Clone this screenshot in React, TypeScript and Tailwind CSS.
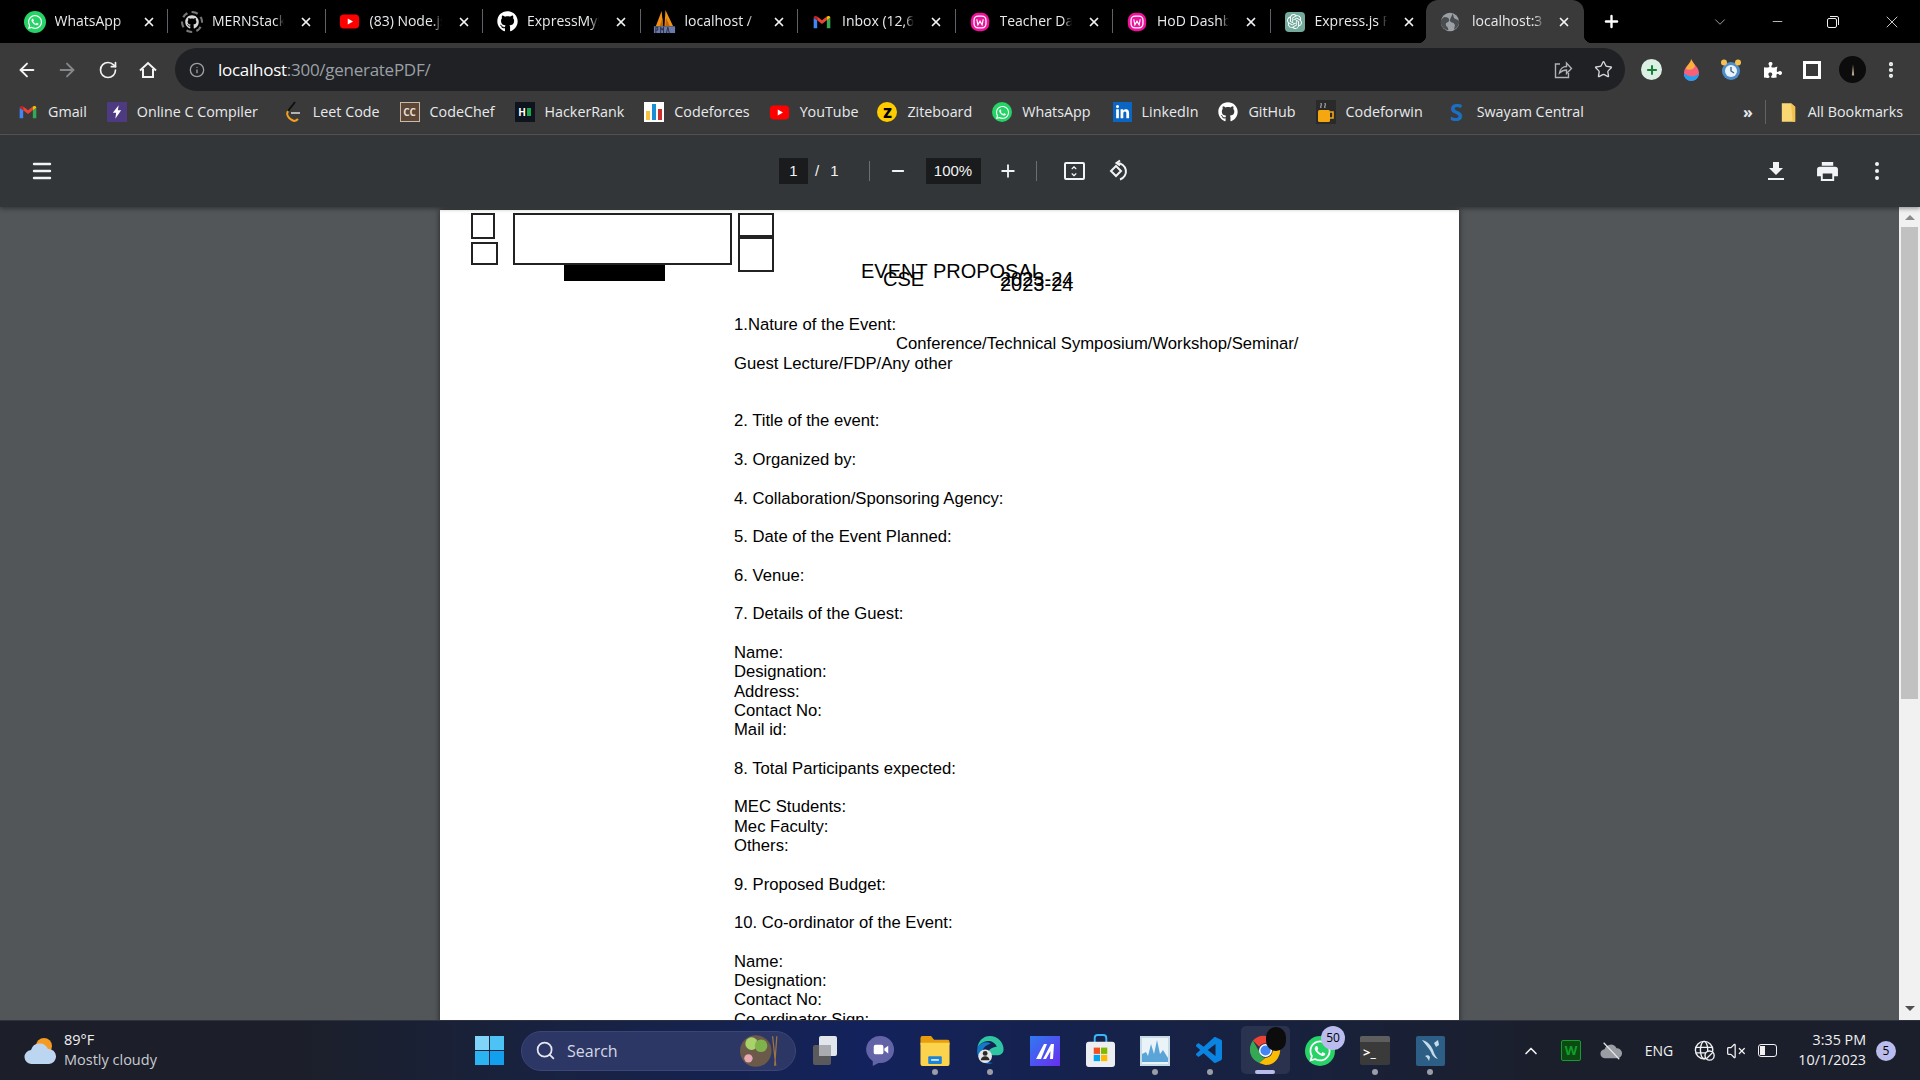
import type { ReactNode } from 'react';
import {
  ArrowLeft,
  ArrowRight,
  ChevronDown,
  ChevronUp,
  Info,
  Menu,
  Minus,
  MoreVertical,
  Plus,
  RotateCw,
  Search,
  Star,
  VolumeX,
  X,
} from 'lucide-react';
import { FaGithub, FaLinkedinIn, FaWhatsapp, FaPuzzlePiece } from 'react-icons/fa';
import { SiOpenai } from 'react-icons/si';
import { VscVscode } from 'react-icons/vsc';

const ui = "font-['Open_Sans',sans-serif]";

const WhatsAppIcon = ({ size = 'w-[22px] h-[22px]', glyph = 16 }: { size?: string; glyph?: number }) => (
  <span className={`${size} rounded-full bg-[#25d366] flex items-center justify-center shrink-0`}>
    <FaWhatsapp size={glyph} color="#fff" />
  </span>
);

const YouTubeIcon = () => (
  <svg viewBox="0 0 24 24" className="w-[21px] h-[21px] shrink-0">
    <rect x="1" y="4" width="22" height="16" rx="4.5" fill="#f00" />
    <path d="M10 8.5v7l6-3.5z" fill="#fff" />
  </svg>
);

const GmailIcon = () => (
  <svg viewBox="0 0 24 24" className="w-5 h-5 shrink-0">
    <path d="M2 7v12.5h4.2V10z" fill="#4285f4" />
    <path d="M22 7v12.5h-4.2V10z" fill="#34a853" />
    <path d="M6.2 10V5.5L12 10l5.8-4.5V10L12 14.5z" fill="#ea4335" />
    <path d="M2 7c0-2 2.5-2.8 4.2-1.5V10z" fill="#c5221f" />
    <path d="M22 7c0-2-2.5-2.8-4.2-1.5V10z" fill="#fbbc04" />
  </svg>
);

const WampIcon = () => (
  <svg viewBox="0 0 24 24" className="w-[22px] h-[22px] shrink-0">
    <rect x="2" y="2" width="20" height="20" rx="8" fill="#f0129b" />
    <rect x="5.5" y="5.5" width="13" height="13" rx="4.5" fill="none" stroke="#fff" strokeWidth="1.4" />
    <path d="M8.5 9l1.2 6 2.3-4 2.3 4 1.2-6" fill="none" stroke="#fff" strokeWidth="1.3" />
  </svg>
);

const GlobeFavicon = () => (
  <svg viewBox="0 0 24 24" className="w-5 h-5 shrink-0">
    <circle cx="12" cy="12" r="11" fill="#9aa0a6" />
    <path d="M5 6c4 0 6 1 6 4s-4 2-4 5 3 2 3 7c-5-1-9-5-9-10 0-2 1-4 4-6zM15 2c2 3 1 5 3 6s4 1 5 3c0 4-2 8-6 10 0-3 2-5 0-7s-5-1-5-4 2-4 3-8z" fill="#4a4d50" />
  </svg>
);

const PmaIcon = () => (
  <svg viewBox="0 0 26 26" className="w-[25px] h-[25px] shrink-0">
    <path d="M4 18 10 2l1.5 16zM13 18l1-17 8 17z" fill="#f29111" />
    <path d="M8 18 11 9l.6 9zM14 18l.6-9 4 9z" fill="#b9670a" />
    <rect x="2" y="18" width="22" height="7" fill="#6b7aa8" />
    <path d="M4 25v-6h2v3H4M9 25v-6l1.5 3 1.5-3v6M15 25l1.5-6 1.5 6" stroke="#20263f" strokeWidth="0.9" fill="none" />
  </svg>
);

const tabs: { title: string; icon: ReactNode }[] = [
  { title: 'WhatsApp', icon: <WhatsAppIcon /> },
  {
    title: 'MERNStack',
    icon: (
      <span className="w-[22px] h-[22px] rounded-full border-2 border-dashed border-[#777] flex items-center justify-center shrink-0">
        <FaGithub size={14} color="#d8d8d8" />
      </span>
    ),
  },
  { title: '(83) Node.js', icon: <YouTubeIcon /> },
  { title: 'ExpressMyS', icon: <FaGithub size={21} color="#fff" className="shrink-0" /> },
  { title: 'localhost /', icon: <PmaIcon /> },
  { title: 'Inbox (12,6', icon: <GmailIcon /> },
  { title: 'Teacher Da', icon: <WampIcon /> },
  { title: 'HoD Dashb', icon: <WampIcon /> },
  {
    title: 'Express.js F',
    icon: (
      <span className="w-5 h-5 rounded-[4px] bg-[#74aa9c] flex items-center justify-center shrink-0">
        <SiOpenai size={15} color="#fff" />
      </span>
    ),
  },
];

const TabTitle = ({ children, gap }: { children: string; gap: string }) => (
  <span className={`${gap} -mt-[2px] w-[72px] overflow-hidden whitespace-nowrap text-[14px] text-[#e8eaed] [mask-image:linear-gradient(to_right,black_88%,transparent)]`}>
    {children}
  </span>
);

const TabStrip = () => (
  <div className={`h-[43px] bg-black flex items-center pl-[10.5px] shrink-0 ${ui}`}>
    {tabs.map((t, i) => (
      <div key={i} className="w-[157.5px] h-full flex items-center justify-start shrink-0 relative pl-[13px]">
        <span className="w-[22px] flex justify-center shrink-0">{t.icon}</span>
        <TabTitle gap="ml-[9px]">{t.title}</TabTitle>
        <X size={14} strokeWidth={3} color="#f1f3f4" className="absolute left-[131px]" />
        {i < tabs.length - 1 && <span className="absolute right-0 top-[9px] h-[24px] w-px bg-[#5f6368]" />}
      </div>
    ))}
    <div className="-ml-[2px] w-[158px] h-full bg-[#3a3a3a] rounded-t-[12px] flex items-center relative pl-[14px] shrink-0">
      <span className="absolute -left-2 bottom-0 w-2 h-2 bg-[radial-gradient(circle_at_0_0,transparent_8px,#3a3a3a_8.5px)]" />
      <span className="absolute -right-2 bottom-0 w-2 h-2 bg-[radial-gradient(circle_at_100%_0,transparent_8px,#3a3a3a_8.5px)]" />
      <GlobeFavicon />
      <TabTitle gap="ml-[12px]">localhost:3</TabTitle>
      <X size={14} strokeWidth={3} color="#f1f3f4" className="absolute left-[131px]" />
    </div>
    <Plus size={19} strokeWidth={3} color="#fff" className="ml-[18px]" />
    <ChevronDown size={18} strokeWidth={1} color="#cfcfcf" className="ml-[90px]" />
    <Minus size={15} strokeWidth={1.2} color="#f1f1f1" className="ml-[41px]" />
    <svg viewBox="0 0 14 14" className="w-[14px] h-[14px] ml-[41px]" fill="none" stroke="#eee" strokeWidth="1">
      <rect x="1.5" y="3.5" width="9" height="9" rx="1.5" />
      <path d="M4 1.5h7a1.5 1.5 0 0 1 1.5 1.5v7" />
    </svg>
    <X size={20} strokeWidth={1} color="#f1f1f1" className="ml-[42px]" />
  </div>
);

const AddressBar = () => (
  <div className={`h-[49px] pt-[4px] bg-[#3a3a3a] flex items-center shrink-0 ${ui}`}>
    <div className="w-[175px] flex items-center shrink-0 pl-[16px]">
      <ArrowLeft size={22} strokeWidth={2} color="#f1f3f4" />
      <ArrowRight size={22} strokeWidth={2} color="#85888b" className="ml-[18px]" />
      <RotateCw size={20} strokeWidth={2} color="#f1f3f4" className="ml-[20px]" />
      <svg viewBox="0 0 20 20" className="w-5 h-5 ml-[20px]" fill="none" stroke="#f1f3f4" strokeWidth="2">
        <path d="M2 10.5 10 3l8 7.5" />
        <path d="M5 9v8h10V9" />
      </svg>
    </div>
    <div className="w-[1450px] h-[43px] rounded-full bg-[#202124] flex items-center shrink-0 pl-[14px] pr-[12px]">
      <Info size={16} strokeWidth={2} color="#9aa0a6" />
      <span className="ml-[13px] text-[17px] tracking-[-0.27px] text-white whitespace-nowrap">
        localhost<span className="text-[#9aa0a6]">:300/generatePDF/</span>
      </span>
      <svg viewBox="0 0 20 20" className="w-5 h-5 ml-auto mr-px" fill="none" stroke="#aeb1b5" strokeWidth="1.4">
        <path d="M7 4H2.5v13.5h13V13" />
        <path d="M6.5 13c.5-4 3.500-6.500 7-6.500V3l5 5.500-5 5V10c-3 0-5 1-7 3z" />
      </svg>
      <Star size={19} strokeWidth={1.7} color="#d5d7da" className="ml-[20px]" />
    </div>
    <div className="flex items-center ml-[16px]">
      <span className="w-[21px] h-[21px] rounded-full bg-[#dcefe4] flex items-center justify-center">
        <Plus size={14} strokeWidth={3.5} color="#188038" />
      </span>
      <svg viewBox="0 0 24 24" className="w-6 h-6 ml-[16px]">
        <path d="M13 1c1 4-7 7-7 14a7 7 0 0 0 7 8c5 0 8-4 8-8 0-6-6-9-8-14z" fill="#f7607a" />
        <path d="M6 15a7 7 0 0 0 7 8c5 0 8-4 8-8-3 4-10 5-15 0z" fill="#1ea1f2" />
        <path d="M13 1c0 4-4 6-5 10 4 2 8 0 9-3-1-3-3-5-4-7z" fill="#fbb03b" />
      </svg>
      <svg viewBox="0 0 24 24" className="w-6 h-6 ml-[17px]">
        <circle cx="12" cy="13" r="9" fill="#4f8fc9" />
        <circle cx="12" cy="13" r="6" fill="#e9f3fb" />
        <path d="M12 9v4l3 2" stroke="#44617a" strokeWidth="1.4" fill="none" />
        <circle cx="5" cy="4.5" r="3" fill="#f2c14e" />
        <circle cx="19" cy="4.5" r="3" fill="#f2c14e" />
      </svg>
      <FaPuzzlePiece size={18} color="#fff" className="ml-[21px]" />
      <span className="w-[18px] h-[18px] border-[3px] border-white ml-[21px] flex justify-end">
        <span className="w-[5px] h-full bg-[#3a3a3a]" />
      </span>
      <span className="w-[27px] h-[27px] rounded-full bg-[#0c0c0c] ml-[18px] flex items-center justify-center">
        <svg viewBox="0 0 10 16" className="w-[8px] h-[14px]">
          <path d="M5 1 3.5 15h3z" fill="#b9a58b" />
        </svg>
      </span>
      <MoreVertical size={20} strokeWidth={3} color="#f1f3f4" className="ml-[15px]" />
    </div>
  </div>
);

const bookmarks: { label: string; icon: ReactNode; extra?: string }[] = [
  { label: 'Gmail', icon: <GmailIcon /> },
  {
    label: 'Online C Compiler',
    icon: (
      <span className="w-5 h-5 bg-[#4e3a80] flex items-center justify-center">
        <svg viewBox="0 0 12 16" className="w-[10px] h-[14px]">
          <path d="M8 0 1 9h4l-1 7 7-10H7z" fill="#fff" />
        </svg>
      </span>
    ),
  },
  {
    label: 'Leet Code',
    icon: (
      <svg viewBox="0 0 20 24" className="w-5 h-6" fill="none" strokeWidth="2">
        <path d="M12 2 5 11" stroke="#111" />
        <path d="M5 11c-2 3 0 8 6 10 2 0 3-1 4-2" stroke="#f89f1b" />
        <path d="M8 13h9" stroke="#b3b3b3" />
      </svg>
    ),
    extra: 'ml-[5px]',
  },
  {
    label: 'CodeChef',
    icon: (
      <span className="w-5 h-5 bg-[#5b4638] border border-[#cbb9a5] flex items-center justify-center text-[10px] font-bold text-[#e8dfd2]">
        CC
      </span>
    ),
  },
  {
    label: 'HackerRank',
    icon: (
      <span className="w-5 h-5 bg-[#0e141e] flex items-center justify-center gap-px">
        <span className="text-[10px] font-bold leading-none text-white">H</span>
        <span className="w-[4px] h-[8px] bg-[#1ba94c]" />
      </span>
    ),
  },
  {
    label: 'Codeforces',
    icon: (
      <span className="w-5 h-5 bg-white flex items-end justify-center gap-[2px] pb-[2px]">
        <span className="w-[4px] h-[9px] bg-[#f5c242]" />
        <span className="w-[4px] h-[16px] bg-[#1a8fd1]" />
        <span className="w-[4px] h-[11px] bg-[#c9302c]" />
      </span>
    ),
  },
  { label: 'YouTube', icon: <YouTubeIcon />, extra: '-ml-[1px]' },
  {
    label: 'Ziteboard',
    icon: (
      <span className="w-5 h-5 rounded-full bg-[#ffcc00] flex items-center justify-center text-[14px] font-extrabold text-black">
        Z
      </span>
    ),
    extra: '-ml-[1px]',
  },
  { label: 'WhatsApp', icon: <WhatsAppIcon size="w-5 h-5" glyph={15} /> },
  {
    label: 'LinkedIn',
    icon: (
      <span className="w-[19px] h-5 bg-[#0a66c2] flex items-center justify-center">
        <FaLinkedinIn size={15} color="#fff" />
      </span>
    ),
    extra: 'ml-[2px]',
  },
  { label: 'GitHub', icon: <FaGithub size={20} color="#fff" /> },
  {
    label: 'Codeforwin',
    icon: (
      <svg viewBox="0 0 20 24" className="w-5 h-6">
        <rect width="20" height="24" fill="#2a2a2a" />
        <rect x="2" y="10" width="12" height="12" rx="1.5" fill="#f5a70f" />
        <path d="M14 12h3v6h-3" fill="none" stroke="#f5a70f" strokeWidth="1.6" />
        <path d="M5 8c-1-2 1-2 0-5M9 8c-1-2 1-2 0-5" stroke="#ddd" strokeWidth="0.9" fill="none" />
      </svg>
    ),
  },
  {
    label: 'Swayam Central',
    icon: (
      <span className="w-5 h-5 flex items-center justify-center text-[24px] font-bold leading-none text-[#1b6fc2]">S</span>
    ),
    extra: 'ml-[4px]',
  },
];

const BookmarksBar = () => (
  <div className={`h-[43px] pb-[2px] bg-[#3a3a3a] flex items-center pl-[18px] pr-[17px] shrink-0 border-b border-[#555] text-[14.3px] text-[#e8eaed] ${ui}`}>
    <div className="flex items-center gap-[20px]">
      {bookmarks.map(b => (
        <div key={b.label} className={`flex items-center gap-[10px] whitespace-nowrap ${b.extra ?? ''}`}>
          {b.icon}
          <span>{b.label}</span>
        </div>
      ))}
    </div>
    <span className="ml-auto text-[16px] font-bold leading-none">»</span>
    <span className="h-[24px] w-px bg-[#5f6368] ml-[12px]" />
    <svg viewBox="0 0 18 24" className="w-[15px] h-[21px] ml-[15px]">
      <path d="M1 1h11l5 4v18H1z" fill="#fbd773" />
      <path d="M12 1l5 4v18h-3z" fill="#f2c14e" />
    </svg>
    <span className="ml-[12px] whitespace-nowrap">All Bookmarks</span>
  </div>
);

const PdfToolbar = () => (
  <div className="relative z-10 h-[72px] bg-[#323639] shadow-[0_2px_4px_rgba(0,0,0,0.35)] flex items-center shrink-0 font-['Liberation_Sans',sans-serif] text-[#f1f3f4]">
    <div className="w-[779px] pl-[30px] shrink-0">
      <Menu size={24} strokeWidth={2.4} color="#f1f3f4" />
    </div>
    <span className="w-[29px] h-[26px] bg-[#191b1c] flex items-center justify-center text-[15px]">1</span>
    <span className="ml-[7px] text-[15px]">/</span>
    <span className="ml-[11px] text-[15px]">1</span>
    <span className="ml-[30px] h-[20px] w-px bg-[#6b6f72]" />
    <Minus size={18} strokeWidth={2.4} className="ml-[19px]" />
    <span className="ml-[19px] w-[55px] h-[26px] bg-[#191b1c] flex items-center justify-center text-[15px]">100%</span>
    <Plus size={20} strokeWidth={2.2} className="ml-[17px]" />
    <span className="ml-[18px] h-[20px] w-px bg-[#6b6f72]" />
    <span className="ml-[27px] w-[21px] h-[18px] border-2 border-[#f1f3f4] rounded-[2px] flex flex-col items-center justify-center">
      <ChevronUp size={8} strokeWidth={4} className="-mb-px" />
      <ChevronDown size={8} strokeWidth={4} />
    </span>
    <svg viewBox="0 0 24 24" className="w-[24px] h-[24px] ml-[21px]" fill="none" stroke="#f1f3f4" strokeWidth="2">
      <path d="M10 7 5 12l5 5 5-5z" />
      <path d="M11 4a9 8.500 0 0 1 3 16.500" />
      <path d="M14 1.500 10.500 4 14 6.500" />
    </svg>
    <div className="ml-auto flex items-center pr-[41px]">
      <svg viewBox="0 0 16 18" className="w-[16px] h-[18px]" fill="#f1f3f4">
        <path d="M5 0h6v6h4l-7 7-7-7h4zM0 16h16v2H0z" />
      </svg>
      <svg viewBox="0 0 22 20" className="w-[21px] h-[19px] ml-[33px]" fill="#f1f3f4">
        <path d="M5 0h12v4H5zM3 5h16a3 3 0 0 1 3 3v7h-4v5H4v-5H0V8a3 3 0 0 1 3-3zm3 7v6h10v-6z" />
      </svg>
      <svg viewBox="0 0 4 18" className="w-[4px] h-[18px] ml-[37px]" fill="#f1f3f4">
        <circle cx="2" cy="2" r="2" />
        <circle cx="2" cy="9" r="2" />
        <circle cx="2" cy="16" r="2" />
      </svg>
    </div>
  </div>
);

const lines = [
  '1.Nature of the Event:',
  'Conference/Technical Symposium/Workshop/Seminar/',
  'Guest Lecture/FDP/Any other',
  '',
  '',
  '2. Title of the event:',
  '',
  '3. Organized by:',
  '',
  '4. Collaboration/Sponsoring Agency:',
  '',
  '5. Date of the Event Planned:',
  '',
  '6. Venue:',
  '',
  '7. Details of the Guest:',
  '',
  'Name:',
  'Designation:',
  'Address:',
  'Contact No:',
  'Mail id:',
  '',
  '8. Total Participants expected:',
  '',
  'MEC Students:',
  'Mec Faculty:',
  'Others:',
  '',
  '9. Proposed Budget:',
  '',
  '10. Co-ordinator of the Event:',
  '',
  'Name:',
  'Designation:',
  'Contact No:',
  'Co-ordinator Sign:',
];

const PdfPage = () => (
  <div className="relative w-[1019px] h-[1320px] mt-[3px] bg-white shrink-0 shadow-[0_0_6px_rgba(0,0,0,0.6)] font-['Liberation_Sans',sans-serif] text-black">
    {/* broken logo boxes and overprinted heading, as the generated pdf draws them */}
    <div className="absolute left-[31px] top-[3px] w-[24px] h-[26px] border-2 border-[#222]" />
    <div className="absolute left-[31px] top-[32px] w-[27px] h-[23px] border-2 border-[#222]" />
    <div className="absolute left-[73px] top-[3px] w-[219px] h-[52px] border-2 border-[#222]" />
    <div className="absolute left-[124px] top-[55px] w-[101px] h-[16px] bg-black" />
    <div className="absolute left-[298px] top-[3px] w-[36px] h-[24px] border-2 border-[#222]" />
    <div className="absolute left-[298px] top-[27px] w-[36px] h-[35px] border-2 border-[#222]" />
    <span className="absolute left-[421px] top-[50px] text-[20px] leading-[22px] whitespace-nowrap">EVENT PROPOSAL</span>
    <span className="absolute left-[443px] top-[58px] text-[20px] leading-[22px]">CSE</span>
    <span className="absolute left-[560px] top-[58px] text-[20px] leading-[22px]">2023-24</span>
    <span className="absolute left-[560px] top-[63px] text-[20px] leading-[22px]">2023-24</span>
    <div className="pl-[294px] pt-[105px] text-[16.67px] leading-[19.3px]">
      {lines.map((l, i) => (
        <div key={i} className={`h-[19.3px] whitespace-nowrap ${i === 1 ? 'pl-[162px]' : ''}`}>
          {l}
        </div>
      ))}
    </div>
  </div>
);

const PdfScrollbar = () => (
  <div className="w-[21px] shrink-0 bg-[#f1f1f1] flex flex-col items-center">
    <span className="mt-[8px] w-0 h-0 border-x-[5px] border-x-transparent border-b-[5px] border-b-[#8a8a8a]" />
    <span className="mt-[7px] w-[17px] h-[472px] bg-[#c1c1c1]" />
    <span className="mt-auto mb-[9px] w-0 h-0 border-x-[5px] border-x-transparent border-t-[5px] border-t-[#505050]" />
  </div>
);

const TaskCell = ({ children, dot, active }: { children: ReactNode; dot?: boolean; active?: boolean }) => (
  <div className="relative w-[55px] h-full flex items-center justify-center shrink-0">
    {active && <span className="absolute left-[3px] right-[3px] top-[5px] bottom-[6px] rounded-[5px] bg-white/8" />}
    <span className="relative flex items-center justify-center">{children}</span>
    {dot && <span className="absolute bottom-[5px] w-[6px] h-[6px] rounded-full bg-[#9a9da6]" />}
    {active && <span className="absolute bottom-[6px] w-[20px] h-[4px] rounded-full bg-[#b9bcec]" />}
  </div>
);

const ChromeIcon = () => (
  <svg viewBox="0 0 32 32" className="w-[31px] h-[31px]">
    <path d="M16 1a15 15 0 0 1 13 7.5H16a7.500 7.500 0 0 0-6.500 3.700L3 5.800A15 15 0 0 1 16 1z" fill="#ea4335" />
    <path d="M3 5.800l6.500 11.200a7.500 7.500 0 0 0 6.500 6.500L9.500 29A15 15 0 0 1 3 5.800z" fill="#34a853" />
    <path d="M29 8.500A15 15 0 0 1 16 31l-6.500-2 6.500-5.500a7.500 7.500 0 0 0 6.500-11.200z" fill="#fbbc04" />
    <circle cx="16" cy="16" r="6" fill="#4285f4" stroke="#fff" strokeWidth="1.5" />
  </svg>
);

const Taskbar = () => (
  <div className={`h-[60px] shrink-0 flex items-center bg-linear-to-r from-[#1c1f29] from-15% via-[#13225c] via-45% to-[#1b1f2c] to-80% border-t border-[#2d3140] text-white relative z-20 ${ui}`}>
    <div className="w-[475px] shrink-0 flex items-center pl-[24px]">
      <svg viewBox="0 0 32 28" className="w-[32px] h-[28px]">
        <circle cx="20" cy="9" r="8" fill="#f59b23" />
        <path d="M8 27a7 7 0 0 1-1-14 9 9 0 0 1 17-1 7.500 7.500 0 0 1 1 15z" fill="#bcd6f2" />
      </svg>
      <div className="ml-[8px] -mt-[2px] text-[14.5px] leading-[20px]">
        <div className="text-[#f1f1f1]">89°F</div>
        <div className="text-[#c9ccd3]">Mostly cloudy</div>
      </div>
    </div>
    <svg viewBox="0 0 29 29" className="w-[29px] h-[29px] shrink-0">
      <rect width="14" height="14" fill="#7fd4f8" />
      <rect x="15" width="14" height="14" fill="#4cc2f5" />
      <rect y="15" width="14" height="14" fill="#2cb3f2" />
      <rect x="15" y="15" width="14" height="14" fill="#12a0ee" />
    </svg>
    <div className="ml-[17px] w-[275px] h-[40px] shrink-0 rounded-full bg-[#2c3766] border border-[#3b4576] flex items-center pl-[13px]">
      <Search size={21} strokeWidth={2} color="#e6e8ef" />
      <span className="ml-[11px] text-[16px] text-[#d5d8e2]">Search</span>
      <svg viewBox="0 0 40 32" className="ml-auto mr-[14px] w-[42px] h-[34px]">
        <circle cx="16" cy="16" r="15" fill="#6b5a4a" />
        <circle cx="12" cy="9" r="6" fill="#a9d36a" />
        <circle cx="21" cy="11" r="6" fill="#7fb24a" />
        <circle cx="9" cy="23" r="4" fill="#e8a8b4" />
        <path d="M32 2l3 28M36 2l-2 28" stroke="#a0743f" strokeWidth="1.2" />
      </svg>
    </div>
    <div className="ml-[1.5px] h-full flex items-center">
      <TaskCell>
        <span className="relative w-[24px] h-[29px]">
          <span className="absolute left-0 bottom-0 w-[18px] h-[20px] rounded-[2px] bg-[#5a5a5c]" />
          <span className="absolute right-0 top-0 w-[18px] h-[20px] rounded-[2px] bg-[#eef0f4] opacity-95" />
          <span className="absolute left-[6px] top-[9px] w-[12px] h-[11px] bg-[#a9abb0]" />
        </span>
      </TaskCell>
      <TaskCell>
        <svg viewBox="0 0 30 32" className="w-[29px] h-[31px]">
          <path d="M15 1a14 14 0 0 1 14 14 14 14 0 0 1-14 14h-2l-6 3v-5A14 14 0 0 1 15 1z" fill="#6264a7" />
          <rect x="8" y="10" width="10" height="10" rx="2" fill="#fff" />
          <path d="M19 14l4-3v8l-4-3z" fill="#fff" />
        </svg>
      </TaskCell>
      <TaskCell dot>
        <svg viewBox="0 0 30 32" className="w-[30px] h-[31px]">
          <path d="M0 3a2 2 0 0 1 2-2h9l3 4h14a2 2 0 0 1 2 2v3H0z" fill="#e89e0c" />
          <path d="M0 8h30v22a2 2 0 0 1-2 2H2a2 2 0 0 1-2-2z" fill="#fcd34d" />
          <rect x="8" y="22" width="14" height="8" rx="1" fill="#1b84d8" />
          <rect x="11" y="25" width="8" height="1.5" fill="#fff" />
        </svg>
      </TaskCell>
      <TaskCell dot>
        <svg viewBox="0 0 30 32" className="w-[30px] h-[31px]">
          <path d="M15 1a14 14 0 0 1 14 14c0 4-3 6-7 6H12c0-5 5-9 10-9-2-5-8-7-13-5-3 1-5 3-7 6C3 6 8 1 15 1z" fill="#2fc5a3" />
          <path d="M2 13c3-5 9-7 14-4-6 1-10 6-9 12 1 5 6 8 11 8-9 3-18-4-16-16z" fill="#1478c8" />
          <circle cx="10" cy="22" r="7" fill="#e6e6e6" />
          <circle cx="10" cy="19" r="2.5" fill="#2a2a2a" />
          <path d="M5.5 26a4.500 4 0 0 1 9 0z" fill="#2a2a2a" />
        </svg>
      </TaskCell>
      <TaskCell>
        <svg viewBox="0 0 30 30" className="w-[30px] h-[30px]">
          <defs>
            <linearGradient id="mm" x1="0" y1="0" x2="1" y2="1">
              <stop offset="0" stopColor="#2f7bf0" />
              <stop offset="1" stopColor="#6a2df0" />
            </linearGradient>
          </defs>
          <rect width="30" height="30" fill="url(#mm)" />
          <path d="M6 23 14 8h3l-6 15zM13 23l8-15h3l-1 15h-3l.5-8-4.500 8z" fill="#fff" />
        </svg>
      </TaskCell>
      <TaskCell>
        <svg viewBox="0 0 30 34" className="w-[29px] h-[33px]">
          <path d="M9 9V4a3 3 0 0 1 3-3h6a3 3 0 0 1 3 3v5" fill="none" stroke="#38b6f5" strokeWidth="2" />
          <rect y="8" width="30" height="26" rx="3" fill="#eceef1" />
          <rect x="8" y="14" width="6.5" height="6.5" fill="#f25022" />
          <rect x="15.5" y="14" width="6.5" height="6.5" fill="#7fba00" />
          <rect x="8" y="21.5" width="6.5" height="6.5" fill="#00a4ef" />
          <rect x="15.5" y="21.5" width="6.5" height="6.5" fill="#ffb900" />
        </svg>
      </TaskCell>
      <TaskCell dot>
        <svg viewBox="0 0 30 30" className="w-[30px] h-[30px]">
          <rect width="30" height="30" fill="#c5dbe6" />
          <rect x="2" y="2" width="26" height="26" fill="#eaf3f8" />
          <path d="M2 26V18l4-2 2 4 3-12 3 10 3-14 3 14 3-4 5 8v4z" fill="#5ba4d8" />
        </svg>
      </TaskCell>
      <TaskCell dot>
        <VscVscode size={32} color="#0a84e0" />
      </TaskCell>
      <TaskCell active>
        <span className="relative">
          <ChromeIcon />
          <span className="absolute -right-[5px] -top-[8px] w-[20px] h-[24px] rounded-full bg-[#0c0c0c]" />
        </span>
      </TaskCell>
      <TaskCell>
        <span className="relative">
          <WhatsAppIcon size="w-[30px] h-[30px]" glyph={24} />
          <span className="absolute -right-[10px] -top-[10px] w-[24px] h-[24px] rounded-full bg-[#b9bcec] flex items-center justify-center text-[12px] text-black">
            50
          </span>
        </span>
      </TaskCell>
      <TaskCell dot>
        <span className="w-[30px] h-[29px] rounded-[2px] bg-[#3a3a3a] flex flex-col overflow-hidden">
          <span className="h-[6px] shrink-0 bg-[#5e5e5e]" />
          <span className="text-[13px] font-bold leading-[20px] pl-[3px] text-white">{'>_'}</span>
        </span>
      </TaskCell>
      <TaskCell dot>
        <svg viewBox="0 0 29 30" className="w-[29px] h-[30px]">
          <rect width="29" height="30" rx="2" fill="#2d5f86" />
          <path d="M6 4c5 1 9 5 11 10 1 3 2 6 5 9-4-1-6-4-7-7-2-4-5-7-9-12z" fill="#c6dcea" />
          <path d="M18 7l4-3 1 5-3 2zM9 20c2-1 4-1 5 1l-1 4c-1-2-2-4-4-5z" fill="#c6dcea" />
        </svg>
      </TaskCell>
    </div>
    <div className="ml-auto flex items-center pr-[24px] h-full">
      <div className="w-10 flex justify-center">
        <ChevronUp size={20} strokeWidth={2} color="#f1f1f1" />
      </div>
      <div className="w-10 flex justify-center">
        <span className="w-[20px] h-[21px] rounded-[2px] bg-[#0b4a12] border border-[#12a02a] flex items-center justify-center text-[13px] font-bold text-[#12a02a]">
          W
        </span>
      </div>
      <div className="w-10 flex justify-center">
        <svg viewBox="0 0 24 20" className="w-[22px] h-[20px]">
          <path d="M6 18a5 5 0 0 1-1-10 7 7 0 0 1 13-1 5.500 5.500 0 0 1 1 11z" fill="#9a9da3" />
          <path d="M4 1l17 18" stroke="#e6e6e6" strokeWidth="1.3" />
        </svg>
      </div>
      <div className="w-[56px] text-center text-[14px] text-[#f1f1f1]">ENG</div>
      <div className="w-[32px] ml-[2px] flex justify-center">
        <svg viewBox="0 0 24 24" className="w-[22px] h-[22px]" fill="none" stroke="#f1f1f1" strokeWidth="1.5">
          <circle cx="11" cy="11" r="9.5" />
          <ellipse cx="11" cy="11" rx="4" ry="9.5" />
          <path d="M2 8h18M2 14h18" />
          <circle cx="17" cy="17" r="5" fill="#1b1f2c" />
          <path d="M13.5 20.500l7-7" />
        </svg>
      </div>
      <div className="w-[30px] flex justify-center">
        <VolumeX size={20} strokeWidth={1.5} color="#f1f1f1" />
      </div>
      <div className="w-[32px] flex justify-center">
        <span className="w-[19px] h-[13px] rounded-[3px] border-[1.5px] border-[#f1f1f1] p-px">
          <span className="block w-[5px] h-full bg-[#f1f1f1]" />
        </span>
      </div>
      <div className="w-[83px] -mt-[2px] text-right text-[14.3px] leading-[20px] text-[#f1f1f1]">
        <div>3:35 PM</div>
        <div>10/1/2023</div>
      </div>
      <span className="ml-[10px] w-5 h-5 rounded-full bg-[#b9bcec] flex items-center justify-center text-[12px] text-black">5</span>
    </div>
  </div>
);

export default function App() {
  return (
    <div className="w-[1920px] h-[1080px] overflow-hidden flex flex-col">
      <TabStrip />
      <AddressBar />
      <BookmarksBar />
      <PdfToolbar />
      <div className="flex-1 min-h-0 flex bg-[#525659]">
        <div className="flex-1 min-w-0 flex justify-center overflow-hidden">
          <PdfPage />
        </div>
        <PdfScrollbar />
      </div>
      <Taskbar />
    </div>
  );
}
